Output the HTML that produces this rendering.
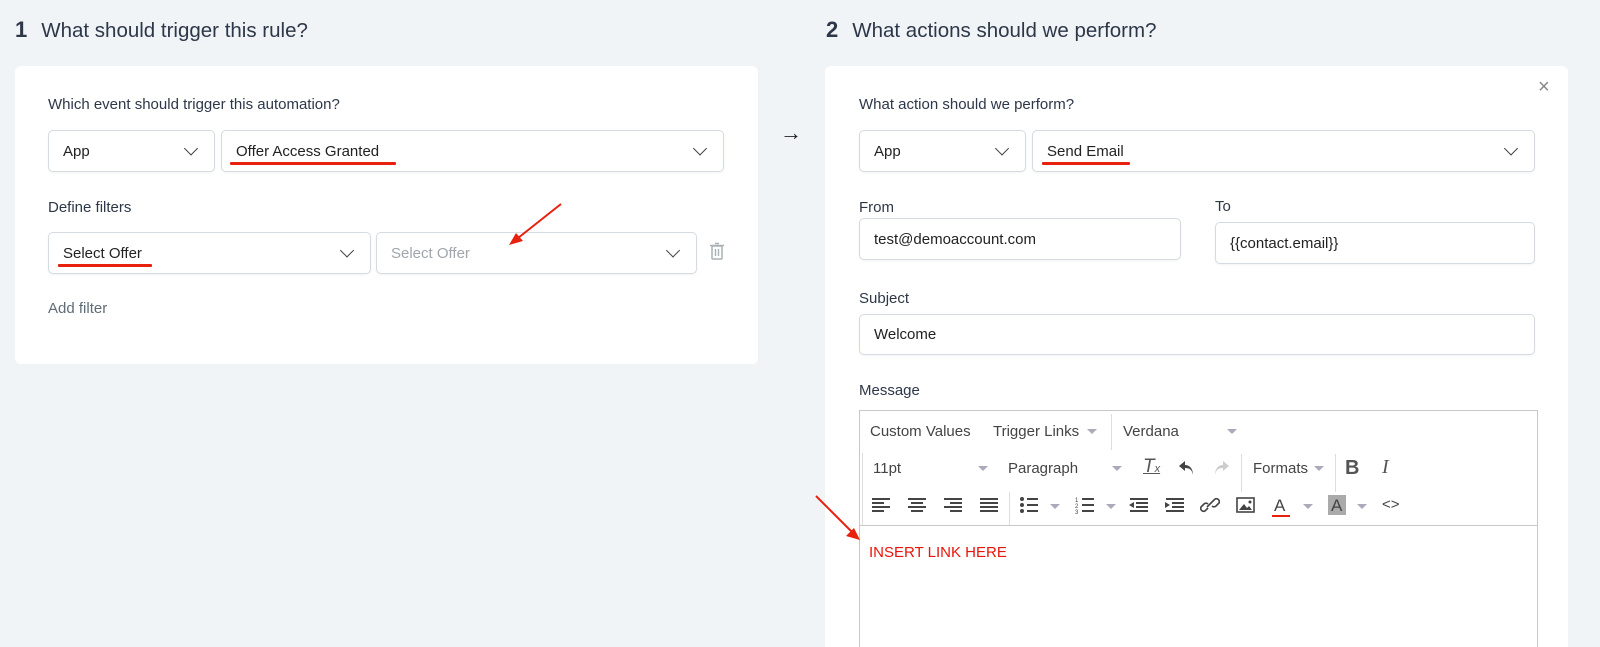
<!DOCTYPE html>
<html style="width:1600px;height:647px;overflow:hidden"><head><meta charset="utf-8"><style>
*{box-sizing:border-box;margin:0;padding:0}
body{width:1600px;height:647px;overflow:hidden;background:#f0f4f7;font-family:"Liberation Sans",Arial,sans-serif;color:#2d3748;position:relative}
.a{position:absolute}
.card{position:absolute;background:#fff;border-radius:6px}
.h{font-size:20.5px;color:#2d3748}
.h b{font-size:22px;margin-right:14px}
.lbl{position:absolute;font-size:15px;color:#2d3748}
.inp{position:absolute;border:1px solid #d5dbe1;border-radius:5px;background:#fff;font-size:15px;color:#222;padding-left:14px;display:flex;align-items:center;box-shadow:0 1px 2px rgba(0,0,0,.05)}
.chev{position:absolute;right:18px;top:50%;width:10px;height:10px;border-right:1.6px solid #444;border-bottom:1.6px solid #444;transform:translateY(-75%) rotate(45deg)}
.ul{position:absolute;height:3px;background:#e8210f;border-radius:1px}
.tb{position:absolute;font-size:15px;color:#444}
.dd{position:absolute;width:0;height:0;border-left:5px solid transparent;border-right:5px solid transparent;border-top:5px solid #aab}
.sep{position:absolute;width:1px;background:#ddd}
</style></head><body>
<div class="a h" style="left:15px;top:17px"><b>1</b>What should trigger this rule?</div>
<div class="a h" style="left:826px;top:17px"><b>2</b>What actions should we perform?</div>
<div class="a" style="left:780px;top:120px;font-size:22px;color:#222">→</div>

<div class="card" style="left:15px;top:66px;width:743px;height:298px"></div>
<div class="lbl" style="left:48px;top:96px">Which event should trigger this automation?</div>
<div class="inp" style="left:48px;top:130px;width:167px;height:42px">App<span class="chev"></span></div>
<div class="inp" style="left:221px;top:130px;width:503px;height:42px">Offer Access Granted<span class="chev"></span></div>
<div class="ul" style="left:230px;top:162px;width:166px"></div>
<div class="lbl" style="left:48px;top:199px">Define filters</div>
<div class="inp" style="left:48px;top:232px;width:323px;height:42px">Select Offer<span class="chev"></span></div>
<div class="ul" style="left:58px;top:264px;width:94px"></div>
<div class="inp" style="left:376px;top:232px;width:321px;height:42px;color:#a0a6ad">Select Offer<span class="chev"></span></div>
<svg class="a" style="left:709px;top:242px" width="16" height="18" viewBox="0 0 16 18"><rect x="3" y="4" width="10" height="13" rx="1" fill="none" stroke="#aab0b6" stroke-width="1.5"/><path d="M1 3.5h14M6 1.5h4M6.5 7v7M9.5 7v7" stroke="#aab0b6" stroke-width="1.4"/></svg>
<div class="lbl" style="left:48px;top:300px;color:#5f6b77">Add filter</div>
<svg class="a" style="left:505px;top:202px" width="60" height="44"><path d="M56 2L8 40" stroke="#e8210f" stroke-width="2"/><path d="M4 43l14-4-7-8z" fill="#e8210f"/></svg>

<div class="card" style="left:825px;top:66px;width:743px;height:581px;border-radius:6px 6px 0 0"></div>
<div class="a" style="left:1538px;top:76px;font-size:20px;color:#888">×</div>
<div class="lbl" style="left:859px;top:96px">What action should we perform?</div>
<div class="inp" style="left:859px;top:130px;width:167px;height:42px">App<span class="chev"></span></div>
<div class="inp" style="left:1032px;top:130px;width:503px;height:42px">Send Email<span class="chev"></span></div>
<div class="ul" style="left:1042px;top:162px;width:88px"></div>
<div class="lbl" style="left:859px;top:199px">From</div>
<div class="lbl" style="left:1215px;top:198px">To</div>
<div class="inp" style="left:859px;top:218px;width:322px;height:42px">test@demoaccount.com</div>
<div class="inp" style="left:1215px;top:222px;width:320px;height:42px">{{contact.email}}</div>
<div class="lbl" style="left:859px;top:290px">Subject</div>
<div class="inp" style="left:859px;top:314px;width:676px;height:41px">Welcome</div>
<div class="lbl" style="left:859px;top:382px">Message</div>

<div class="a" style="left:859px;top:410px;width:679px;height:237px;border:1px solid #c8c8c8;border-bottom:none;background:#fff"></div>
<div class="a" style="left:860px;top:525px;width:677px;height:1px;background:#c8c8c8"></div>
<div class="tb" style="left:870px;top:423px">Custom Values</div>
<div class="tb" style="left:993px;top:423px">Trigger Links</div><div class="dd" style="left:1087px;top:429px"></div>
<div class="sep" style="left:1111px;top:414px;height:36px"></div>
<div class="tb" style="left:1123px;top:423px">Verdana</div><div class="dd" style="left:1227px;top:429px"></div>
<div class="sep" style="left:862px;top:453px;height:72px"></div>
<div class="tb" style="left:873px;top:460px">11pt</div><div class="dd" style="left:978px;top:466px"></div>
<div class="tb" style="left:1008px;top:460px">Paragraph</div><div class="dd" style="left:1112px;top:466px"></div>
<div class="tb" style="left:1143px;top:456px;font-style:italic;font-size:19px;text-decoration:underline;color:#555">T<span style="font-size:11px">x</span></div>
<svg class="a" style="left:1178px;top:459px" width="18" height="18" viewBox="0 0 18 18"><path d="M7 2L1 7l6 5V9c5 0 7 2 8 7 0-6-3-10-8-10z" fill="#444"/></svg>
<svg class="a" style="left:1212px;top:459px" width="18" height="18" viewBox="0 0 18 18"><path d="M11 2l6 5-6 5V9c-5 0-7 2-8 7 0-6 3-10 8-10z" fill="#ccc"/></svg>
<div class="sep" style="left:1241px;top:454px;height:38px"></div>
<div class="tb" style="left:1253px;top:460px">Formats</div><div class="dd" style="left:1314px;top:466px"></div>
<div class="sep" style="left:1335px;top:454px;height:38px"></div>
<div class="tb" style="left:1345px;top:457px;font-weight:bold;font-size:20px;color:#555">B</div>
<div class="tb" style="left:1382px;top:456px;font-style:italic;font-size:20px;font-family:'Liberation Serif',serif;color:#555">I</div>
<svg class="a" style="left:870px;top:496px" width="140" height="18" viewBox="0 0 140 18" fill="#444">
<rect x="2" y="2" width="18" height="2"/><rect x="2" y="6" width="12" height="2"/><rect x="2" y="10" width="18" height="2"/><rect x="2" y="14" width="12" height="2"/>
<rect x="38" y="2" width="18" height="2"/><rect x="41" y="6" width="12" height="2"/><rect x="38" y="10" width="18" height="2"/><rect x="41" y="14" width="12" height="2"/>
<rect x="74" y="2" width="18" height="2"/><rect x="80" y="6" width="12" height="2"/><rect x="74" y="10" width="18" height="2"/><rect x="80" y="14" width="12" height="2"/>
<rect x="110" y="2" width="18" height="2"/><rect x="110" y="6" width="18" height="2"/><rect x="110" y="10" width="18" height="2"/><rect x="110" y="14" width="18" height="2"/></svg>
<div class="sep" style="left:1009px;top:492px;height:33px"></div>
<svg class="a" style="left:1019px;top:496px" width="20" height="18" fill="#444"><circle cx="3" cy="3" r="2"/><circle cx="3" cy="9" r="2"/><circle cx="3" cy="15" r="2"/><rect x="8" y="2" width="11" height="2"/><rect x="8" y="8" width="11" height="2"/><rect x="8" y="14" width="11" height="2"/></svg>
<div class="dd" style="left:1050px;top:504px"></div>
<svg class="a" style="left:1075px;top:496px" width="20" height="18" fill="#444"><text x="0" y="6" font-size="6" font-family="Liberation Sans">1</text><text x="0" y="12" font-size="6" font-family="Liberation Sans">2</text><text x="0" y="18" font-size="6" font-family="Liberation Sans">3</text><rect x="7" y="2" width="12" height="2"/><rect x="7" y="8" width="12" height="2"/><rect x="7" y="14" width="12" height="2"/></svg>
<div class="dd" style="left:1106px;top:504px"></div>
<svg class="a" style="left:1128px;top:496px" width="60" height="18" fill="#444"><rect x="2" y="2" width="18" height="2"/><rect x="8" y="6" width="12" height="2"/><rect x="8" y="10" width="12" height="2"/><rect x="2" y="14" width="18" height="2"/><path d="M1 9l5-3v6z"/>
<rect x="38" y="2" width="18" height="2"/><rect x="44" y="6" width="12" height="2"/><rect x="44" y="10" width="12" height="2"/><rect x="38" y="14" width="18" height="2"/><path d="M42 9l-5-3v6z"/></svg>
<svg class="a" style="left:1200px;top:496px" width="20" height="18" fill="none" stroke="#444" stroke-width="1.6"><path d="M8 12l-3 3a3 3 0 01-4-4l3-3a3 3 0 014 0M12 6l3-3a3 3 0 014 4l-3 3a3 3 0 01-4 0M7 11l6-6"/></svg>
<svg class="a" style="left:1236px;top:497px" width="20" height="16"><rect x="1" y="1" width="17" height="14" fill="none" stroke="#444" stroke-width="1.6"/><path d="M3 13l5-6 3 4 2-2 3 4z" fill="#444"/><circle cx="14" cy="5" r="1.5" fill="#444"/></svg>
<div class="tb" style="left:1274px;top:496px;font-size:17px">A</div><div class="a" style="left:1272px;top:515px;width:18px;height:2px;background:#e8210f"></div>
<div class="dd" style="left:1303px;top:504px"></div>
<div class="a" style="left:1328px;top:495px;width:18px;height:20px;background:#aaa"></div><div class="tb" style="left:1331px;top:496px;font-size:17px">A</div>
<div class="dd" style="left:1357px;top:504px"></div>
<div class="tb" style="left:1382px;top:496px;font-size:15px">&lt;&gt;</div>

<div class="a" style="left:869px;top:544px;font-size:15px;color:#e8140a">INSERT LINK HERE</div>
<svg class="a" style="left:812px;top:492px" width="50" height="50"><path d="M4 4l38 38" stroke="#e8210f" stroke-width="2"/><path d="M48 48l-14-4 8-8z" fill="#e8210f"/></svg>
</body></html>
